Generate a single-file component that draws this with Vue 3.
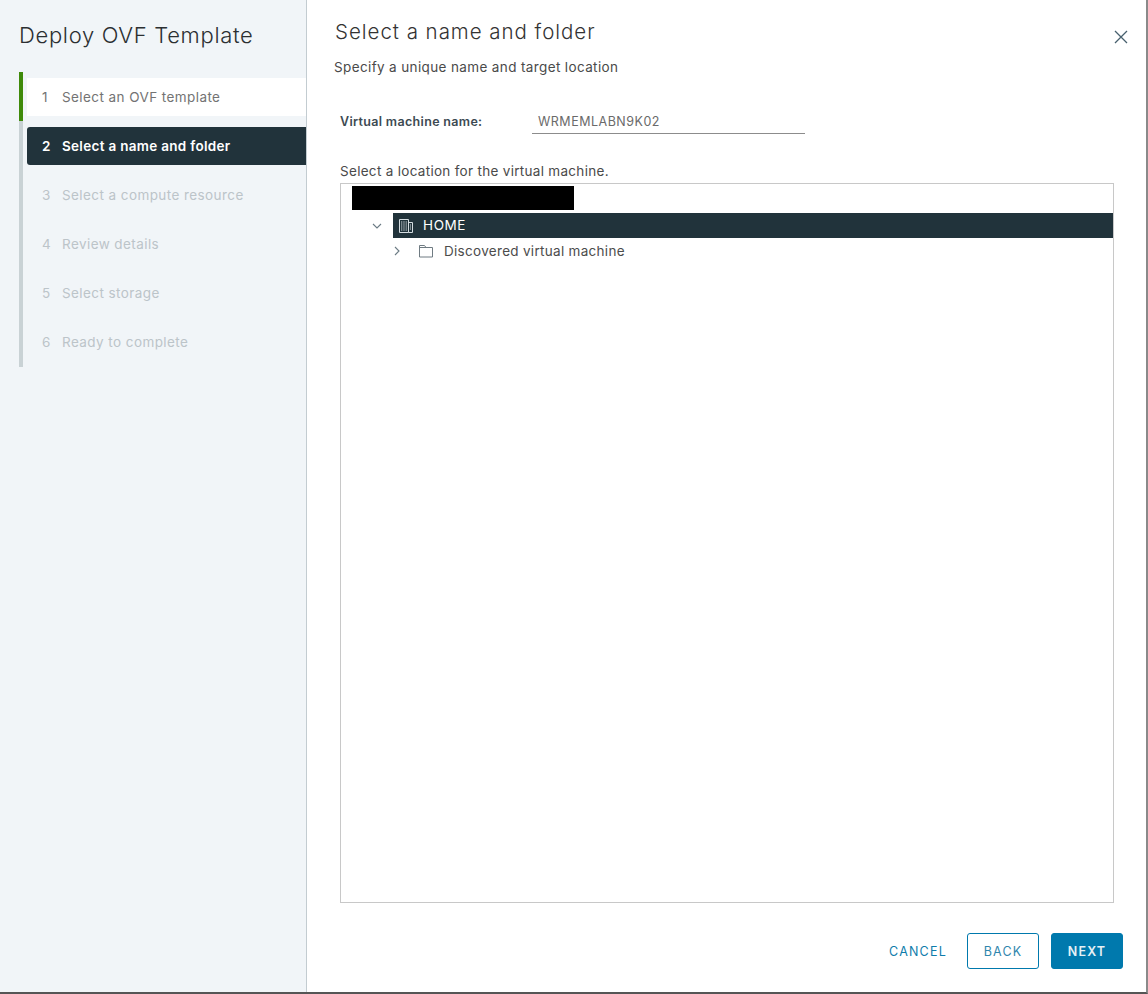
<script setup>
const steps = [
  { n: 1, label: 'Select an OVF template', state: 'done' },
  { n: 2, label: 'Select a name and folder', state: 'active' },
  { n: 3, label: 'Select a compute resource', state: 'todo' },
  { n: 4, label: 'Review details', state: 'todo' },
  { n: 5, label: 'Select storage', state: 'todo' },
  { n: 6, label: 'Ready to complete', state: 'todo' },
]
</script>

<template>
  <div class="dialog">
    <aside class="side">
      <h1 class="side-title">Deploy OVF Template</h1>
      <ol class="steps">
        <li v-for="s in steps" :key="s.n" class="step" :class="s.state">
          <div class="step-box">
            <span class="num">{{ s.n }}</span>
            <span>{{ s.label }}</span>
          </div>
        </li>
      </ol>
    </aside>
    <main class="main">
      <header class="head">
        <h2 class="title">Select a name and folder</h2>
        <button class="close" aria-label="Close">
          <svg width="14" height="14" viewBox="0 0 14 14">
            <path d="M1 1 L13 13 M13 1 L1 13" stroke="#47606e" stroke-width="1.3" fill="none" />
          </svg>
        </button>
      </header>
      <p class="sub">Specify a unique name and target location</p>
      <div class="form-row">
        <label class="vm-label">Virtual machine name:</label>
        <div class="input">WRMEMLABN9K02</div>
      </div>
      <p class="loc">Select a location for the virtual machine.</p>
      <div class="tree">
        <div class="redacted"></div>
        <div class="node home">
          <svg class="caret" width="10" height="10" viewBox="0 0 10 10">
            <path d="M1 3 L5 7 L9 3" stroke="#6b7b84" stroke-width="1.1" fill="none" />
          </svg>
          <div class="home-bar">
            <svg class="ic" width="16" height="16" viewBox="0 0 16 16" fill="none" stroke="#d5dde1" stroke-width="1">
              <path d="M1.5 1.5 H10.5 V14.5 H1.5 Z M10.5 4.5 H14.5 V14.5 H10.5" />
              <path d="M3 4 H9 M3 6 H9 M3 8 H9 M3 10 H9 M3 12 H9 M12 7 H13.5 M12 9 H13.5 M12 11 H13.5" stroke-dasharray="1 .7" />
            </svg>
            <span class="home-text">HOME</span>
          </div>
        </div>
        <div class="node child">
          <svg class="caret" width="10" height="10" viewBox="0 0 10 10">
            <path d="M3 1 L7 5 L3 9" stroke="#6b7b84" stroke-width="1.1" fill="none" />
          </svg>
          <svg class="ic folder" width="16" height="16" viewBox="0 0 16 16" fill="none" stroke="#6f7b82" stroke-width="1">
            <path d="M1.5 14 V2.5 H6.5 L8 4.5 H14.5 V14 Z M1.5 4.5 H8" />
          </svg>
          <span>Discovered virtual machine</span>
        </div>
      </div>
      <footer class="foot">
        <button class="btn link">CANCEL</button>
        <button class="btn outline">BACK</button>
        <button class="btn solid">NEXT</button>
      </footer>
    </main>
  </div>
</template>

<style>
html, body { margin: 0; background: #fff; }
</style>

<style scoped>
.dialog {
  width: 1148px;
  height: 994px;
  box-sizing: border-box;
  display: flex;
  background: #fff;
  border-right: 2px solid #8a8a8a;
  border-bottom: 2px solid #555;
  font-family: Inter, "Open Sans", sans-serif;
  color: #565656;
}
.side {
  width: 307px;
  flex: none;
  box-sizing: border-box;
  background: #f1f5f8;
  border-right: 1px solid #c3ccd1;
  padding: 19px 0 0 19px;
}
.side-title {
  margin: 0;
  font-size: 22px;
  font-weight: 300;
  line-height: 32px;
  letter-spacing: 0.67px;
  color: #2b2f31;
}
.steps {
  list-style: none;
  margin: 21px 0 0;
  padding: 0;
}
.step {
  height: 49px;
  box-sizing: border-box;
  border-left: 4px solid #c9d2d5;
  padding: 6px 0 0 4px;
  font-size: 13.5px;
  letter-spacing: 0.42px;
}
.step:last-child { height: 50px; }
.step.done { border-left-color: #3f8a0a; color: #737373; }
.step.active { color: #fff; font-weight: 600; letter-spacing: 0.3px; }
.step.todo { color: #bcc4c9; }
.step-box {
  height: 38px;
  display: flex;
  align-items: center;
  padding-left: 15px;
  border-radius: 3px 0 0 3px;
}
.step.done .step-box { background: #fff; border-radius: 0; }
.step.active .step-box { background: #21333b; }
.num { width: 20px; flex: none; }
.main {
  flex: 1;
  min-width: 0;
  padding: 0 32px 0 27px;
  display: flex;
  flex-direction: column;
}
.head {
  height: 54px;
  display: flex;
  align-items: flex-start;
  justify-content: space-between;
  padding-left: 1px;
}
.title {
  margin: 18px 0 0;
  font-size: 20.5px;
  font-weight: 300;
  line-height: 28px;
  letter-spacing: 0.97px;
  color: #333;
}
.close {
  margin: 30px -14px 0 0;
  padding: 0;
  border: 0;
  background: none;
  width: 14px;
  height: 14px;
  display: block;
}
.close svg { display: block; }
.sub {
  margin: 4px 0 0;
  font-size: 13.5px;
  line-height: 18px;
  letter-spacing: 0.37px;
  color: #4a4a4a;
}
.form-row {
  display: flex;
  align-items: flex-start;
  margin: 32px 0 0 6px;
}
.vm-label {
  width: 192px;
  font-size: 12.5px;
  font-weight: 600;
  line-height: 18px;
  letter-spacing: 0.33px;
  color: #3d4a52;
  margin-top: 5px;
}
.input {
  width: 273px;
  height: 26px;
  box-sizing: border-box;
  border-bottom: 1px solid #8c8c8c;
  padding: 5px 0 0 6px;
  font-size: 12.5px;
  line-height: 18px;
  letter-spacing: 0.5px;
  color: #6a6a6a;
}
.loc {
  margin: 28px 0 0 6px;
  font-size: 13.5px;
  line-height: 18px;
  letter-spacing: 0.3px;
  color: #4a4a4a;
}
.tree {
  margin: 3px 0 0 6px;
  height: 720px;
  box-sizing: border-box;
  border: 1px solid #c8c8c8;
  padding-top: 2px;
  font-size: 13.5px;
  letter-spacing: 0.3px;
}
.redacted {
  width: 222px;
  height: 24px;
  margin-left: 11px;
  background: #000;
}
.node { display: flex; align-items: center; }
.home { height: 25px; margin-top: 3px; padding-left: 31px; }
.home .caret { margin-right: 11px; }
.home-bar {
  flex: 1;
  height: 25px;
  display: flex;
  align-items: center;
  padding-left: 5px;
  background: #21333b;
  color: #fff;
}
.home-bar .ic { margin-right: 9px; }
.home-text { letter-spacing: 0.6px; padding-bottom: 2px; }
.child { height: 26px; padding-left: 51px; color: #4c4c4c; }
.child .caret { margin-right: 16px; }
.child .ic { margin-right: 10px; }
.foot {
  margin-top: 30px;
  margin-right: -9px;
  display: flex;
  justify-content: flex-end;
  gap: 12px;
}
.btn {
  height: 36px;
  width: 72px;
  box-sizing: border-box;
  border-radius: 3px;
  font-family: inherit;
  font-size: 12.5px;
  letter-spacing: 1.2px;
  padding: 0;
}
.link { background: none; border: 0; color: #0e7cab; width: 68px; margin-right: 2px; padding-right: 2px; }
.outline { background: #fff; border: 1px solid #0079ad; color: #2f86ad; }
.solid { background: #0079ad; border: 1px solid #0079ad; color: #e6f1f6; font-weight: 600; }
</style>
